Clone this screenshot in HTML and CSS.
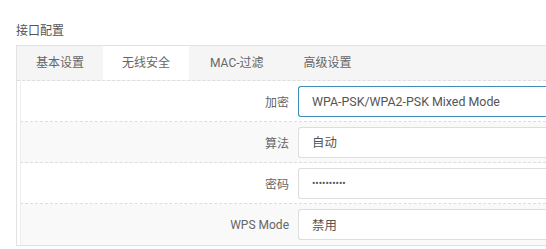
FILE: index.html
```html
<!DOCTYPE html>
<html lang="zh">
<head>
    <meta charset="UTF-8">
    <title>接口配置</title>
    <link rel="stylesheet" href="styles.css">
</head>
<body>
    <h3 class="section-title">接口配置</h3>
    <div class="panel">
        <ul class="tabs">
            <li>基本设置</li>
            <li class="active">无线安全</li>
            <li class="wide">MAC-过滤</li>
            <li>高级设置</li>
        </ul>
        <div class="tab-content">
            <div class="row">
                <label>加密</label>
                <input class="field focus" type="text" value="WPA-PSK/WPA2-PSK Mixed Mode">
            </div>
            <div class="row odd">
                <label>算法</label>
                <input class="field" type="text" value="自动">
            </div>
            <div class="row">
                <label>密码</label>
                <input class="field pass" type="password" value="1234567890">
            </div>
            <div class="row odd">
                <label>WPS Mode</label>
                <input class="field" type="text" value="禁用">
            </div>
        </div>
    </div>
</body>
</html>
```

FILE: styles.css
```css
* {
    margin: 0;
    padding: 0;
    box-sizing: border-box;
}

body {
    font-family: Roboto, "Noto Sans CJK SC", sans-serif;
    font-size: 12px;
    color: #666;
    background: #fff;
    padding: 22px 0 0 16px;
    overflow: hidden;
}

.section-title {
    font-size: 12px;
    font-weight: normal;
    color: #555;
    line-height: 18px;
    margin-bottom: 5px;
}

.panel {
    border-top: 1px solid #e2e2e2;
    border-left: 1px solid #e2e2e2;
    border-bottom: 1px solid #e2e2e2;
}

.tabs {
    list-style: none;
    display: flex;
    background: #f5f5f5;
    height: 35px;
    border-bottom: 1px dashed #ddd;
}

.tabs li {
    padding: 0 19px;
    line-height: 34px;
    color: #666;
}

.tabs li.wide {
    padding: 0 21px;
}

.tabs li.active {
    background: #fff;
}

.tab-content {
    padding-left: 3px;
}

.row {
    display: flex;
    align-items: center;
    height: 41px;
    border-left: 1px solid #efefef;
    border-bottom: 1px dashed #ddd;
    background: #fff;
}

.row:last-child {
    border-bottom: none;
}

.row.odd {
    background: #f9f9f9;
}

.row label {
    flex-shrink: 0;
    width: 277px;
    text-align: right;
    padding-right: 9px;
    color: #666;
}

.field {
    flex: 1;
    min-width: 0;
    height: 31px;
    border: 1px solid #ddd;
    border-right: none;
    border-radius: 3px 0 0 3px;
    padding: 0 13px;
    font-family: Roboto, "Noto Sans CJK SC", sans-serif;
    font-size: 12.4px;
    color: #555;
    background: #fff;
    outline: none;
}

.field.focus {
    border-color: #3c8dbc;
}

.field.pass {
    font-size: 10px;
}
```
